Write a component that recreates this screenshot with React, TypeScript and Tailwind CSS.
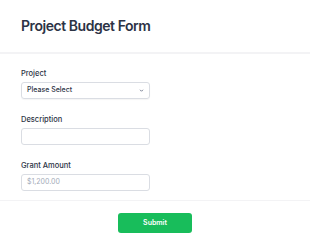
export default function App() {
  return (
    <main className="min-h-screen w-[310px] bg-white font-['Inter',sans-serif] text-[#2c3345]">
      <header className="px-[21px] pt-[16px] pb-[17px]">
        <h1 className="text-[14px] font-semibold leading-[19px] tracking-[-0.45px]">Project Budget Form</h1>
      </header>
      <div className="h-[2px] bg-[#f3f3f5]" />

      <section className="flex flex-col gap-[16px] px-[21px] pt-[15px] pb-[9px]">
        <div className="flex flex-col gap-[3px]">
          <label className="text-[7.5px] font-medium leading-[10px]">Project</label>
          <div className="flex h-[17px] w-[129px] items-center justify-between rounded-[3px] border border-[#dadde3] px-[5px] text-[7px] font-medium text-[#2c3345] shadow-[0_1px_1px_rgba(0,0,0,0.04)]">
            <span>Please Select</span>
            <svg width="5" height="3" viewBox="0 0 6 4" fill="none">
              <path d="M1 1l2 2 2-2" stroke="#6b7489" strokeWidth="1.2" />
            </svg>
          </div>
        </div>

        <div className="flex flex-col gap-[3px]">
          <label className="text-[7.5px] font-medium leading-[10px]">Description</label>
          <div className="h-[17px] w-[129px] rounded-[3px] border border-[#dadde3]" />
        </div>

        <div className="flex flex-col gap-[3px]">
          <label className="text-[7.5px] font-medium leading-[10px]">Grant Amount</label>
          <div className="flex h-[17px] w-[129px] items-center rounded-[3px] border border-[#dadde3] px-[5px] text-[7px] text-[#a4abb8]">
            $1,200.00
          </div>
        </div>
      </section>

      <div className="h-[1px] bg-[#f3f3f5]" />

      <footer className="flex justify-center pt-[12px]">
        <button className="h-[20px] w-[74px] rounded-[3px] bg-[#18bd5b] text-[7px] font-semibold text-white">
          Submit
        </button>
      </footer>
    </main>
  );
}
